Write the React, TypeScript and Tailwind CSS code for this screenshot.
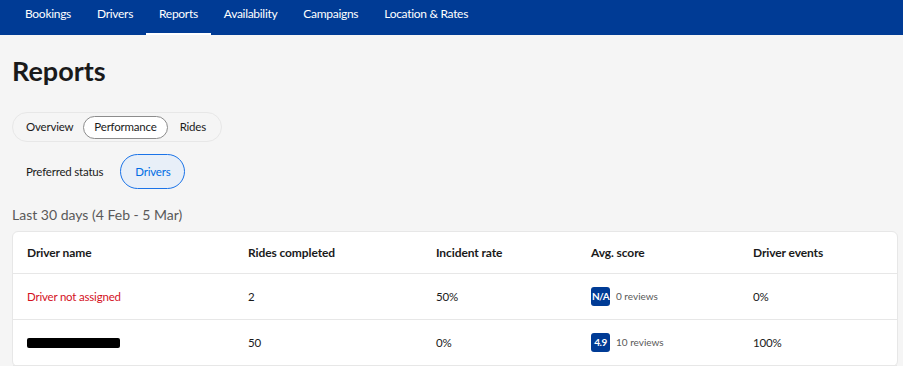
import React from 'react';

const navItems = ['Bookings', 'Drivers', 'Reports', 'Availability', 'Campaigns', 'Location & Rates'];

interface DriverRow {
  name: string | null;
  rides: string;
  incident: string;
  score: string;
  reviews: string;
  events: string;
}

const rows: DriverRow[] = [
  { name: 'Driver not assigned', rides: '2', incident: '50%', score: 'N/A', reviews: '0 reviews', events: '0%' },
  { name: null, rides: '50', incident: '0%', score: '4.9', reviews: '10 reviews', events: '100%' },
];

const cols = 'grid grid-cols-[221px_188px_155px_162px_1fr] px-[14px]';

const App = () => {
  return (
    <div className="min-h-screen bg-[#f5f5f5] text-[#1a1a1a]" style={{ fontFamily: 'Lato, sans-serif' }}>
      {/* Top nav */}
      <nav className="h-[35px] bg-[#003b95] flex pl-[12px]">
        {navItems.map((item) => (
          <div
            key={item}
            className={`px-[13px] pt-[6px] leading-[16px] text-[12px] tracking-[-0.3px] text-white ${item === 'Reports' ? 'border-b-2 border-white' : ''}`}
          >
            {item}
          </div>
        ))}
      </nav>

      <div className="pl-[12px] pr-[5px]">
        <h1 className="text-[27px] font-bold mt-[20px] leading-[31px] text-[#1a1a1a]">Reports</h1>

        {/* Main tabs */}
        <div className="mt-[26px] inline-flex items-center h-[30px] rounded-full border border-[#e7e7e7] px-[3px] text-[11.5px] tracking-[-0.2px]">
          <span className="px-[10px]">Overview</span>
          <span className="px-[10px] h-[23px] flex items-center rounded-full bg-white border border-[#8c8c8c]">Performance</span>
          <span className="px-[12px]">Rides</span>
        </div>

        {/* Sub tabs */}
        <div className="mt-[12px] flex items-center text-[11.5px] tracking-[-0.2px]">
          <span className="px-[14px]">Preferred status</span>
          <span className="ml-[3px] h-[35px] px-[14px] flex items-center rounded-full bg-[#e8eff8] border border-[#1a73e8] text-[#006ce4]">
            Drivers
          </span>
        </div>

        <p className="mt-[16px] text-[14px] text-[#595959] leading-[20px]">Last 30 days (4 Feb - 5 Mar)</p>

        {/* Table */}
        <div className="mt-[6px] bg-white border border-[#e7e7e7] rounded-[6px]">
          <div className={`${cols} h-[42px] items-center text-[12px] font-bold tracking-[-0.1px] border-b border-[#e7e7e7]`}>
            <span>Driver name</span>
            <span>Rides completed</span>
            <span>Incident rate</span>
            <span>Avg. score</span>
            <span>Driver events</span>
          </div>
          {rows.map((row, i) => (
            <div key={i} className={`${cols} h-[46px] items-center text-[11.5px] tracking-[-0.2px] border-b border-[#e7e7e7]`}>
              {row.name ? (
                <span className="text-[#d4111e]">{row.name}</span>
              ) : (
                <span className="block w-[93px] h-[10px] bg-black rounded-[2px]" />
              )}
              <span>{row.rides}</span>
              <span>{row.incident}</span>
              <span className="flex items-center gap-[6px]">
                <span className="w-[19px] h-[19px] rounded-[3px] bg-[#003b95] text-white text-[10px] font-bold flex items-center justify-center tracking-[-0.5px]">
                  {row.score}
                </span>
                <span className="text-[10px] text-[#595959] tracking-normal">{row.reviews}</span>
              </span>
              <span>{row.events}</span>
            </div>
          ))}
        </div>
      </div>
    </div>
  );
};

export default App;
